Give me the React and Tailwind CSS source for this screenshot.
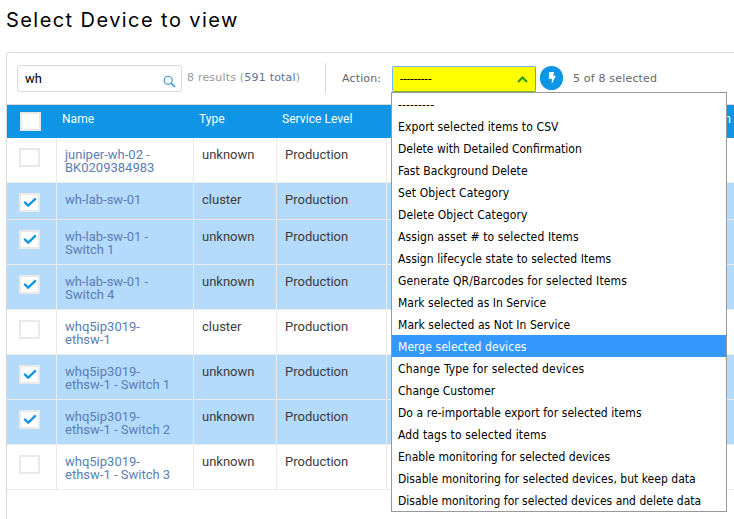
import React from "react";

const rows = [
  { name: ["juniper-wh-02 -", "BK0209384983"], type: "unknown", on: false },
  { name: ["wh-lab-sw-01"], type: "cluster", on: true },
  { name: ["wh-lab-sw-01 -", "Switch 1"], type: "unknown", on: true },
  { name: ["wh-lab-sw-01 -", "Switch 4"], type: "unknown", on: true },
  { name: ["whq5ip3019-", "ethsw-1"], type: "cluster", on: false },
  { name: ["whq5ip3019-", "ethsw-1 - Switch 1"], type: "unknown", on: true },
  { name: ["whq5ip3019-", "ethsw-1 - Switch 2"], type: "unknown", on: true },
  { name: ["whq5ip3019-", "ethsw-1 - Switch 3"], type: "unknown", on: false },
];

const wide = "tracking-[0.12px]";
const mid = "tracking-[0.06px]";
const plain = "tracking-normal";

const options = [
  ["---------", wide],
  ["Export selected items to CSV", wide],
  ["Delete with Detailed Confirmation", plain],
  ["Fast Background Delete", mid],
  ["Set Object Category", wide],
  ["Delete Object Category", wide],
  ["Assign asset # to selected Items", wide],
  ["Assign lifecycle state to selected Items", mid],
  ["Generate QR/Barcodes for selected Items", wide],
  ["Mark selected as In Service", plain],
  ["Mark selected as Not In Service", mid],
  ["Merge selected devices", mid],
  ["Change Type for selected devices", "tracking-[0.16px]"],
  ["Change Customer", plain],
  ["Do a re-importable export for selected items", mid],
  ["Add tags to selected items", "tracking-[0.16px]"],
  ["Enable monitoring for selected devices", "tracking-[0.03px]"],
  ["Disable monitoring for selected devices, but keep data", "tracking-[0.03px]"],
  ["Disable monitoring for selected devices and delete data", plain],
];

function Checkbox({ on }) {
  return (
    <span className="flex h-[19px] w-[21px] items-center justify-center border-2 border-[#e9e9e9] bg-white">
      {on && (
        <svg width="14" height="11" viewBox="0 0 14 11" fill="none" stroke="#0e95e6" strokeWidth="2.3">
          <path d="M1.2 4.9 5.2 8.7 12.8 1.4" />
        </svg>
      )}
    </span>
  );
}

function Row({ row }) {
  const tall = row.name.length > 1;
  return (
    <div
      className={
        "grid grid-cols-[50px_137px_83px_110px_1fr] border-b border-[#ebebeb] text-[13px] leading-[13px] text-[#3c3c3c] " +
        (tall ? "h-[45px] " : "h-[37px] ") +
        (row.on ? "bg-[#b4dafc]" : "bg-white")
      }
    >
      <div className="border-r border-[#ebebeb] pt-[10px] pl-3">
        <Checkbox on={row.on} />
      </div>
      <div className="border-r border-[#ebebeb] pt-[10px] pl-2 whitespace-nowrap text-[#5b7eb4]">
        {row.name.map((line) => (
          <div key={line}>{line}</div>
        ))}
      </div>
      <div className="border-r border-[#ebebeb] pt-[10px] pl-2">{row.type}</div>
      <div className="border-r border-[#ebebeb] pt-[10px] pl-2">Production</div>
    </div>
  );
}

export default function App() {
  return (
    <div className="relative h-[519px] w-[734px] overflow-hidden bg-white font-[Roboto,sans-serif]">
      <h1 className="h-[52px] pt-[6px] pl-[6px] font-[Inter,sans-serif] text-[20px] leading-7 tracking-[1.43px] whitespace-nowrap text-black">
        Select Device to view
      </h1>
      <div className="ml-[6px] h-[480px] rounded-tl-sm border-t border-l border-[#d9d9d9]">
        <div className="flex h-[52px] items-start border-b border-[#d9d9d9] font-['DejaVu_Sans',sans-serif] text-[11px] leading-[14px] whitespace-nowrap">
          <div className="mt-3 ml-[10px] flex h-[27px] w-[165px] shrink-0 items-center justify-between rounded-[3px] border border-[#d9d9d9] pr-[5px] pl-[7px] font-[Roboto,sans-serif] text-[13px] text-black">
            <span>wh</span>
            <svg className="mt-[6px]" width="13" height="13" viewBox="0 0 13 13" fill="none" stroke="#2b93dc" strokeWidth="1.1">
              <circle cx="5.2" cy="5.2" r="4" />
              <path d="M8.2 8.2 12 12" strokeWidth="1.6" />
            </svg>
          </div>
          <div className="mt-[18px] ml-[5px] w-[138px] tracking-[0.2px] text-[#999]">
            8 results (<span className="text-[#5b7297]">591 total</span>)
          </div>
          <div className="mt-[10px] h-[31px] w-px bg-[#d9d9d9]" />
          <div className="mt-[19px] ml-4 w-[50px] tracking-[0.15px] text-[#666]">Action:</div>
          <div className="mt-[13px] flex h-[26px] w-[144px] shrink-0 items-center justify-between rounded-[2px] border border-[#6fb9e8] border-r-[#7fb32a] border-b-[#7fb32a] bg-[#ffff00] pr-[7px] pl-[7px] font-[Roboto,sans-serif] text-[12px] text-black">
            <span className="tracking-[0.2px]">---------</span>
            <svg width="11" height="7" viewBox="0 0 11 7" fill="none" stroke="#269b00" strokeWidth="2">
              <path d="M1 6 5.5 1.5 10 6" />
            </svg>
          </div>
          <div className="mt-[13px] ml-1 flex h-6 w-[23px] shrink-0 items-center justify-center rounded-full bg-[#0e95e6]">
            <svg width="8" height="12" viewBox="0 0 8 12" fill="#fff">
              <path d="M1.2 0H6L5.2 3.8H7.8L3.8 12V6.8H.8Z" />
            </svg>
          </div>
          <div className="mt-[19px] ml-[10px] tracking-[0.18px] text-[#666]">5 of 8 selected</div>
        </div>
        <div className="grid h-[33px] grid-cols-[50px_137px_83px_110px_1fr] bg-[#0e95e6] text-[12px] leading-[14px] text-white">
          <div className="pt-[7px] pl-[13px]">
            <Checkbox />
          </div>
          <div className="pt-[7px] pl-[5px] tracking-[0.05px]">Name</div>
          <div className="pt-[7px] pl-[5px] tracking-[0.05px]">Type</div>
          <div className="pt-[7px] pl-[5px] tracking-[0.05px]">Service Level</div>
          <div className="pt-[7px] pr-[3px] text-right">Location</div>
        </div>
        {rows.map((row, i) => (
          <Row key={i} row={row} />
        ))}
      </div>
      <div className="absolute top-[92px] left-[391px] h-[420px] w-[336px] border border-[#999] bg-white font-['DejaVu_Sans_Condensed','DejaVu_Sans',sans-serif] text-[12px] whitespace-nowrap text-black">
        {options.map(([label, tracking]) => (
          <div
            key={label}
            className={
              "h-[22px] pt-px pl-[6px] leading-[22px] " +
              tracking +
              (label === "Merge selected devices" ? " bg-[#3399ff] text-white" : "")
            }
          >
            {label}
          </div>
        ))}
      </div>
    </div>
  );
}
